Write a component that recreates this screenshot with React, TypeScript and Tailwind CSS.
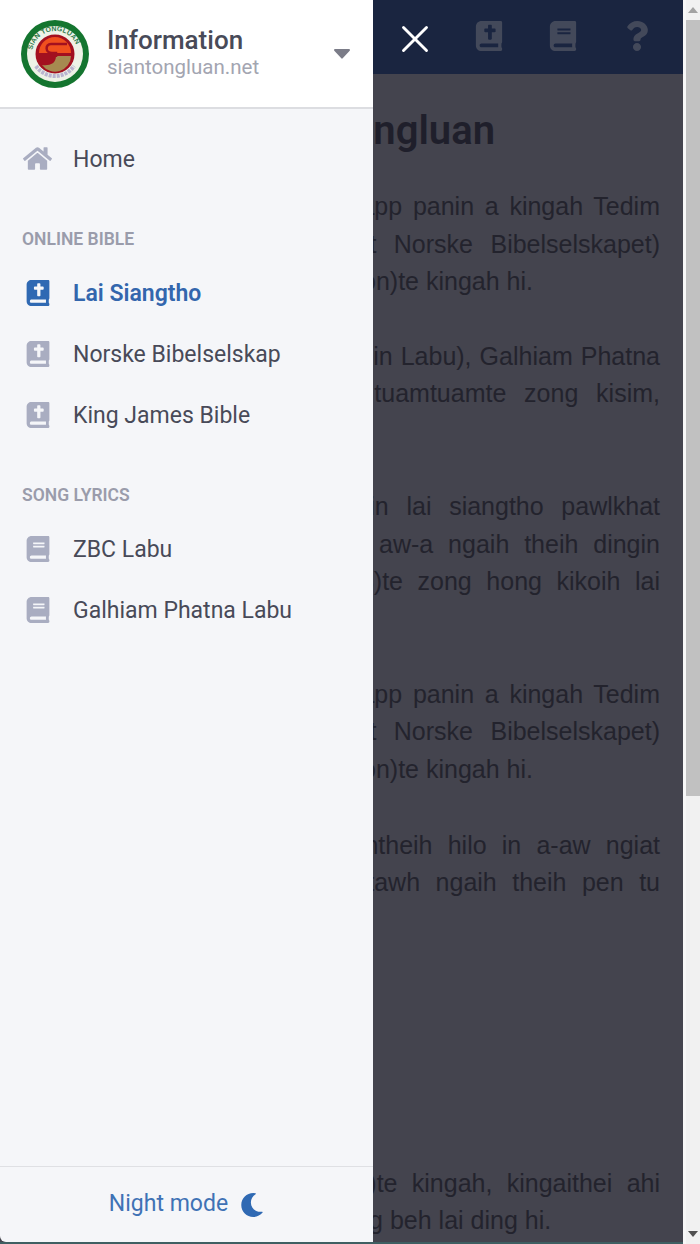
import { FaBible, FaBook, FaHome, FaMoon, FaQuestion } from 'react-icons/fa'
import { X } from 'lucide-react'

const bibles = [
  { label: 'Lai Siangtho', active: true },
  { label: 'Norske Bibelselskap' },
  { label: 'King James Bible' },
]

const songs = ['ZBC Labu', 'Galhiam Phatna Labu']

// only the right part of these lines shows past the drawer
const blocks = [
  {
    top: 'mt-[33px]',
    lines: [
      { text: 'Hih Siantongluan Zomi Bible app panin a kingah Tedim', fill: true },
      { text: 'Lai Siangtho (Tedim Bible at Norske Bibelselskapet)', fill: true },
      { text: 'leh King James V (Tedim Version)te kingah hi.' },
    ],
  },
  {
    top: 'mt-[37px]',
    lines: [
      { text: 'Late dang pen ZBC Labu (Zomin Labu), Galhiam Phatna', fill: true },
      { text: 'Labu te ahi hi. Lasa hihte tuamtuamte zong kisim,', fill: true },
    ],
  },
  {
    top: 'mt-[75px]',
    lines: [
      { text: 'Hih website panin ngahtheihin lai siangtho pawlkhat', fill: true },
      { text: 'sim kik zelzel in na lungsim aw-a ngaih theih dingin', fill: true },
      { text: 'Mongoliate Versionten (Pau 3)te zong hong kikoih lai', fill: true },
    ],
  },
  {
    top: 'mt-[75px]',
    lines: [
      { text: 'Hih Siantongluan Zomi Bible app panin a kingah Tedim', fill: true },
      { text: 'Lai Siangtho (Tedim Bible at Norske Bibelselskapet)', fill: true },
      { text: 'leh King James V (Tedim Version)te kingah hi.' },
    ],
  },
  {
    top: 'mt-[38px]',
    lines: [
      { text: 'Hih a nuai-a Labute pen kantheih hilo in a-aw ngiat', fill: true },
      { text: 'kisak theih ahih manin a mitawh ngaih theih pen tu', fill: true },
    ],
  },
  {
    top: 'mt-[263px]',
    lines: [
      { text: 'Bible Apps (Online Tedim TT)te kingah, kingaithei ahi', fill: true },
      { text: 'Hih app te panin bang hun ciang beh lai ding hi.' },
    ],
  },
]

function Logo() {
  return (
    <svg viewBox="0 0 68 68" className="w-[68px] h-[68px] shrink-0">
      <circle cx="34" cy="34" r="34" fill="#14752f" />
      <circle cx="34" cy="34" r="28" fill="#eef2e6" />
      <path id="logo-top" d="M11 34a23 23 0 0 1 46 0" fill="none" />
      <text fontSize="7" fontWeight="700" fill="#2f7a4c" fontFamily="Liberation Sans, sans-serif">
        <textPath href="#logo-top" startOffset="4">SIAN TONGLUAN</textPath>
      </text>
      <path d="M15 46a23 23 0 0 0 38 0" fill="none" stroke="#b9b4cf" strokeWidth="4" strokeDasharray="3 1" />
      <circle cx="34" cy="34" r="19.5" fill="#a3101f" />
      <path d="M18 33a16 16 0 0 1 32 0z" fill="#f0501e" />
      <path d="M35 36h15a16 16 0 0 1-29 9c7 1 14-1 14-9z" fill="#a68a50" />
      <path d="M46 24H30c-6 0-6 9 1 9h4v4" fill="none" stroke="#a3101f" strokeWidth="2.5" />
    </svg>
  )
}

function NavRow({ label, active, icon }: { label: string; active?: boolean; icon: React.ReactNode }) {
  return (
    <div className="flex items-center h-[61px] pl-[23px]">
      <span className={`w-[50px] shrink-0 pb-[4px] text-[26px] ${active ? 'text-[#2f69b3]' : 'text-[#a9adc1]'}`}>
        <span className="flex w-[29px] justify-center">{icon}</span>
      </span>
      <span className={`text-[23px] ${active ? 'font-semibold text-[#3366ad]' : 'text-[#484a58]'}`}>{label}</span>
    </div>
  )
}

export default function App() {
  return (
    <div className="relative w-[700px] h-[1244px] overflow-hidden flex bg-[#f1f1f1]">
      <div className="flex-1 min-w-0 flex flex-col bg-[#44444e]">
        <div className="h-[74px] shrink-0 bg-[#1a2540] flex items-center justify-end pr-[31px] pb-[3px] gap-[44px] text-[#43495a]">
          <X className="w-[46px] h-[46px] text-white -mr-[8px] mt-[6px]" strokeWidth={1.5} />
          <FaBible className="text-[30px]" />
          <FaBook className="text-[30px]" />
          <FaQuestion className="text-[30px]" />
        </div>
        <div className="flex-1 px-[23px] font-['Liberation_Sans',sans-serif] text-[25px] leading-[37.6px] text-[#23232d]">
          <h1 className="mt-[33px] h-[48px] text-right pr-[165px] font-['Roboto',sans-serif] font-semibold text-[40px] leading-[48px] text-[#1f1f2b]">
            Siantongluan
          </h1>
          {blocks.map((block, i) => (
            <div key={i} className={block.top}>
              {block.lines.map((line) => (
                <div
                  key={line.text}
                  className={`whitespace-nowrap ${line.fill ? 'text-justify [text-align-last:justify]' : ''}`}
                >
                  {line.text}
                </div>
              ))}
            </div>
          ))}
        </div>
        <div className="h-[2px] shrink-0 bg-[#3f5f62]" />
      </div>

      <div className="w-[17px] shrink-0 flex flex-col bg-[#f1f1f1] border-l-[3px] border-[#f7f7f7]">
        <div className="h-[20px] flex items-center justify-center text-[#a3a3a3]">
          <svg viewBox="0 0 10 6" className="w-[10px] h-[6px]"><path d="M5 0l5 6H0z" fill="currentColor" /></svg>
        </div>
        <div className="h-[776px] bg-[#c1c1c1]" />
        <div className="flex-1" />
        <div className="h-[20px] flex items-center justify-center text-[#505050]">
          <svg viewBox="0 0 10 6" className="w-[10px] h-[6px]"><path d="M5 6l5-6H0z" fill="currentColor" /></svg>
        </div>
      </div>

      {/* drawer */}
      <div className="absolute left-0 top-0 bottom-[2px] w-[373px] flex flex-col bg-[#f5f6f9] rounded-bl-[6px] font-['Roboto',sans-serif]">
        <div className="h-[109px] shrink-0 bg-white border-b-2 border-[#dcdde1] flex items-center pl-[21px] pr-[23px]">
          <Logo />
          <div className="ml-[18px] flex-1 pb-[4px]">
            <div className="text-[26px] leading-[30px] font-medium text-[#484a58]">Information</div>
            <div className="text-[20.5px] leading-[24px] text-[#a3a5b1]">siantongluan.net</div>
          </div>
          <svg viewBox="0 0 16 10" className="w-[16px] h-[10px] text-[#7b7c88]"><path d="M1 0h14a1 1 0 0 1 .7 1.7L8.7 9.3a1 1 0 0 1-1.4 0L.3 1.7A1 1 0 0 1 1 0z" fill="currentColor" /></svg>
        </div>

        <div className="flex-1 pt-[21px]">
          <NavRow label="Home" icon={<FaHome className="text-[29px]" />} />
          <div className="mt-[36px] mb-[13px] pl-[22px] text-[17.5px] leading-[24px] font-semibold text-[#9a9cab]">ONLINE BIBLE</div>
          {bibles.map((b) => (
            <NavRow key={b.label} label={b.label} active={b.active} icon={<FaBible />} />
          ))}
          <div className="mt-[36px] mb-[13px] pl-[22px] text-[17.5px] leading-[24px] font-semibold text-[#9a9cab]">SONG LYRICS</div>
          {songs.map((s) => (
            <NavRow key={s} label={s} icon={<FaBook />} />
          ))}
        </div>

        <div className="h-[76px] shrink-0 border-t border-[#dfe0e4] flex items-center justify-center gap-[12px] text-[#3f72b5]">
          <span className="text-[23px]">Night mode</span>
          <FaMoon className="text-[24px] text-[#2f69b3]" />
        </div>
      </div>
    </div>
  )
}
